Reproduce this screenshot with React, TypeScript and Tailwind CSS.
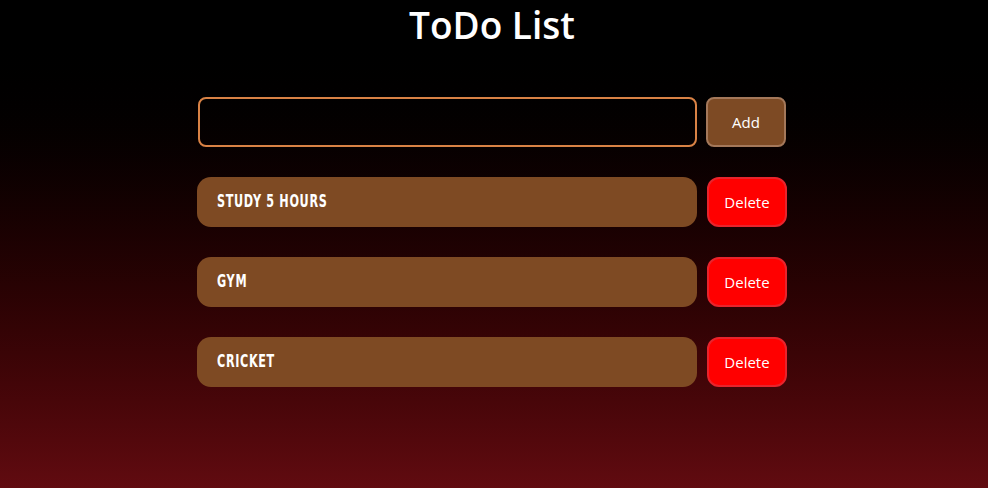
import React, { useState } from 'react';

const initialTasks = ['Study 5 hours', 'Gym', 'Cricket'];

const App: React.FC = () => {
  const [tasks, setTasks] = useState<string[]>(initialTasks);
  const [text, setText] = useState('');

  const addTask = () => {
    if (!text.trim()) return;
    setTasks([...tasks, text.trim()]);
    setText('');
  };

  return (
    <div className="min-h-[488px] w-full bg-gradient-to-b from-black from-[5%] to-[#610b10] font-['Open_Sans',sans-serif] text-white">
      <h1 className="pr-[4px] pt-[1px] text-center text-[37px] font-semibold leading-[48px]">ToDo List</h1>

      <div className="ml-[197px] mt-[48px] flex w-[590px] flex-col gap-[30px]">
        <div className="flex items-center gap-[9px]">
          <input
            type="text"
            value={text}
            onChange={(e) => setText(e.target.value)}
            className="ml-[1px] h-[50px] w-[499px] rounded-[8px] border-2 border-[#d98245] bg-transparent px-4 text-white outline-none"
          />
          <button
            onClick={addTask}
            className="h-[50px] w-[80px] rounded-[8px] border-2 border-[#a4785a] bg-[#7d4a24] text-[15px]"
          >
            Add
          </button>
        </div>

        {tasks.map((task, i) => (
          <div key={i} className="flex items-center gap-[10px]">
            <div className="flex h-[50px] w-[500px] items-center rounded-[14px] bg-[#7e4a23] pb-[1px] pl-[20px] font-['DejaVu_Sans',sans-serif] text-[17px] font-bold uppercase tracking-[1px]">
              {/* narrow display face stand-in */}
              <span className="inline-block origin-left scale-x-[0.66] whitespace-nowrap">{task}</span>
            </div>
            <button
              onClick={() => setTasks(tasks.filter((_, j) => j !== i))}
              className="h-[50px] w-[80px] rounded-[12px] border-2 border-[#e8242c] bg-[#ff0000] text-[15px]"
            >
              Delete
            </button>
          </div>
        ))}
      </div>
    </div>
  );
};

export default App;
